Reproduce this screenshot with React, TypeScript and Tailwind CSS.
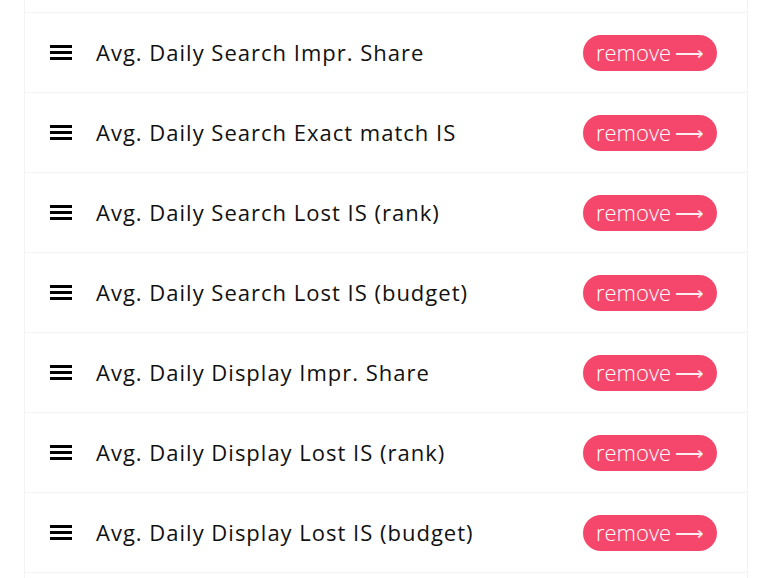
const rows = [
  "Avg. Daily Search Impr. Share",
  "Avg. Daily Search Exact match IS",
  "Avg. Daily Search Lost IS (rank)",
  "Avg. Daily Search Lost IS (budget)",
  "Avg. Daily Display Impr. Share",
  "Avg. Daily Display Lost IS (rank)",
  "Avg. Daily Display Lost IS (budget)",
];

function Bars() {
  return (
    <div className="flex w-[22px] flex-col gap-[3px]">
      <span className="h-[3px] bg-black" />
      <span className="h-[3px] bg-black" />
      <span className="h-[3px] bg-black" />
    </div>
  );
}

export default function App() {
  return (
    <div className="h-[578px] overflow-hidden bg-white pl-[24px] pr-[20px] font-['Open_Sans',sans-serif] text-[#111]">
      <div className="h-full border-x border-[#f3f3f3]">
        <div className="h-[13px] border-b border-[#f3f3f3]" />
        {rows.map((r) => (
          <div key={r} className="flex h-[80px] items-center border-b border-[#f3f3f3] pl-[25px] pr-[30px]">
            <Bars />
            <div className="ml-[24px] flex-1 text-[22px] tracking-[1px]">{r}</div>
            <button className="flex h-[36px] w-[134px] items-center justify-center gap-[4px] rounded-full bg-[#f4476b] text-[22px] font-light text-white">
              <span>remove</span>
              <span className="font-['DejaVu_Sans',sans-serif] text-[20px] font-extralight text-white/90">⟶</span>
            </button>
          </div>
        ))}
      </div>
    </div>
  );
}
